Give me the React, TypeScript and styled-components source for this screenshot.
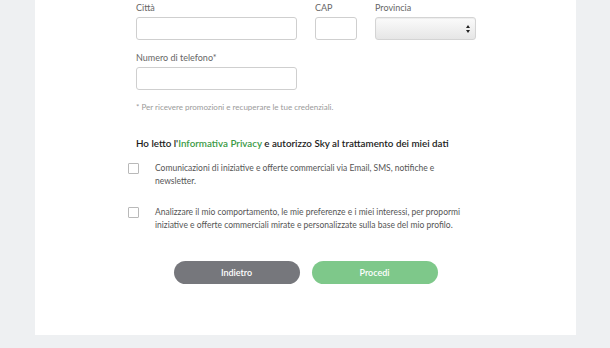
import React from "react";
import styled, { createGlobalStyle } from "styled-components";

const GlobalStyle = createGlobalStyle`
  html, body {
    margin: 0;
    padding: 0;
    background: #eef0f2;
  }
  body {
    font-family: "Lato", "Liberation Sans", sans-serif;
    -webkit-font-smoothing: antialiased;
  }
`;

const Page = styled.div`
  width: 610px;
  height: 348px;
  overflow: hidden;
  background: #eef0f2;
`;

const Card = styled.div`
  width: 541px;
  margin-left: 35px;
  background: #fff;
  padding: 2px 0 51px 101px;
  box-sizing: border-box;
`;

const FieldRow = styled.div<{ $cols: string }>`
  display: grid;
  grid-template-columns: ${(p) => p.$cols};
  column-gap: 18px;
  margin-bottom: 12px;
`;

const Field = styled.label`
  display: flex;
  flex-direction: column;
`;

const Label = styled.span`
  font-size: 9px;
  line-height: 12px;
  color: #666;
  margin-bottom: 3px;
`;

const Input = styled.input`
  height: 23px;
  box-sizing: border-box;
  border: 1px solid #cfcfcf;
  border-radius: 3px;
  background: #fff;
  padding: 0 6px;
  outline: none;
`;

const SelectBox = styled.div`
  height: 23px;
  box-sizing: border-box;
  border: 1px solid #d4d4d4;
  border-radius: 3px;
  background: linear-gradient(#fbfbfb, #e6e6e6);
  box-shadow: inset 0 1px 1px rgba(0, 0, 0, 0.06);
  display: flex;
  align-items: center;
  justify-content: flex-end;
  padding-right: 5px;
`;

const Note = styled.p`
  margin: 10px 0 0;
  font-size: 8px;
  line-height: 10px;
  color: #9a9a9a;
`;

const Heading = styled.h3`
  margin: 24px 0 12px;
  font-size: 9.8px;
  line-height: 14px;
  font-weight: 600;
  color: #1c1c1c;
`;

const Green = styled.span`
  color: #3a9a45;
`;

const Consent = styled.div`
  display: flex;
  align-items: flex-start;
  gap: 16px;
  margin-left: -8px;
  margin-bottom: 18px;
`;

const Box = styled.span`
  flex: none;
  width: 11px;
  height: 11px;
  box-sizing: border-box;
  border: 1px solid #b9b9b9;
  border-radius: 1px;
  margin-top: 1px;
`;

const ConsentText = styled.p`
  margin: 0;
  width: 312px;
  font-size: 8.5px;
  line-height: 13px;
  color: #555;
`;

const Actions = styled.div`
  display: flex;
  justify-content: center;
  gap: 12px;
  margin: 29px 0 0 -101px;
`;

const Button = styled.button<{ $bg: string }>`
  width: 126px;
  height: 23px;
  border: none;
  border-radius: 12px;
  background: ${(p) => p.$bg};
  color: #fff;
  font-family: inherit;
  font-size: 9px;
  font-weight: 600;
  cursor: pointer;
`;

export default function App() {
  return (
    <Page>
      <GlobalStyle />
      <Card>
        <FieldRow $cols="161px 42px 101px">
          <Field>
            <Label>Città</Label>
            <Input />
          </Field>
          <Field>
            <Label>CAP</Label>
            <Input />
          </Field>
          <Field>
            <Label>Provincia</Label>
            <SelectBox>
              <svg width="4" height="8" viewBox="0 0 4 8">
                <path d="M2 0 L4 3 H0 Z M2 8 L4 5 H0 Z" fill="#222" />
              </svg>
            </SelectBox>
          </Field>
        </FieldRow>
        <FieldRow $cols="161px">
          <Field>
            <Label>Numero di telefono*</Label>
            <Input />
          </Field>
        </FieldRow>
        <Note>* Per ricevere promozioni e recuperare le tue credenziali.</Note>
        <Heading>
          Ho letto l'<Green>Informativa Privacy</Green> e autorizzo Sky al
          trattamento dei miei dati
        </Heading>
        <Consent>
          <Box />
          <ConsentText>
            Comunicazioni di iniziative e offerte commerciali via Email, SMS,
            notifiche e newsletter.
          </ConsentText>
        </Consent>
        <Consent>
          <Box />
          <ConsentText>
            Analizzare il mio comportamento, le mie preferenze e i miei
            interessi, per propormi iniziative e offerte commerciali mirate e
            personalizzate sulla base del mio profilo.
          </ConsentText>
        </Consent>
        <Actions>
          <Button $bg="#76777c">Indietro</Button>
          <Button $bg="#7ec88a">Procedi</Button>
        </Actions>
      </Card>
    </Page>
  );
}
